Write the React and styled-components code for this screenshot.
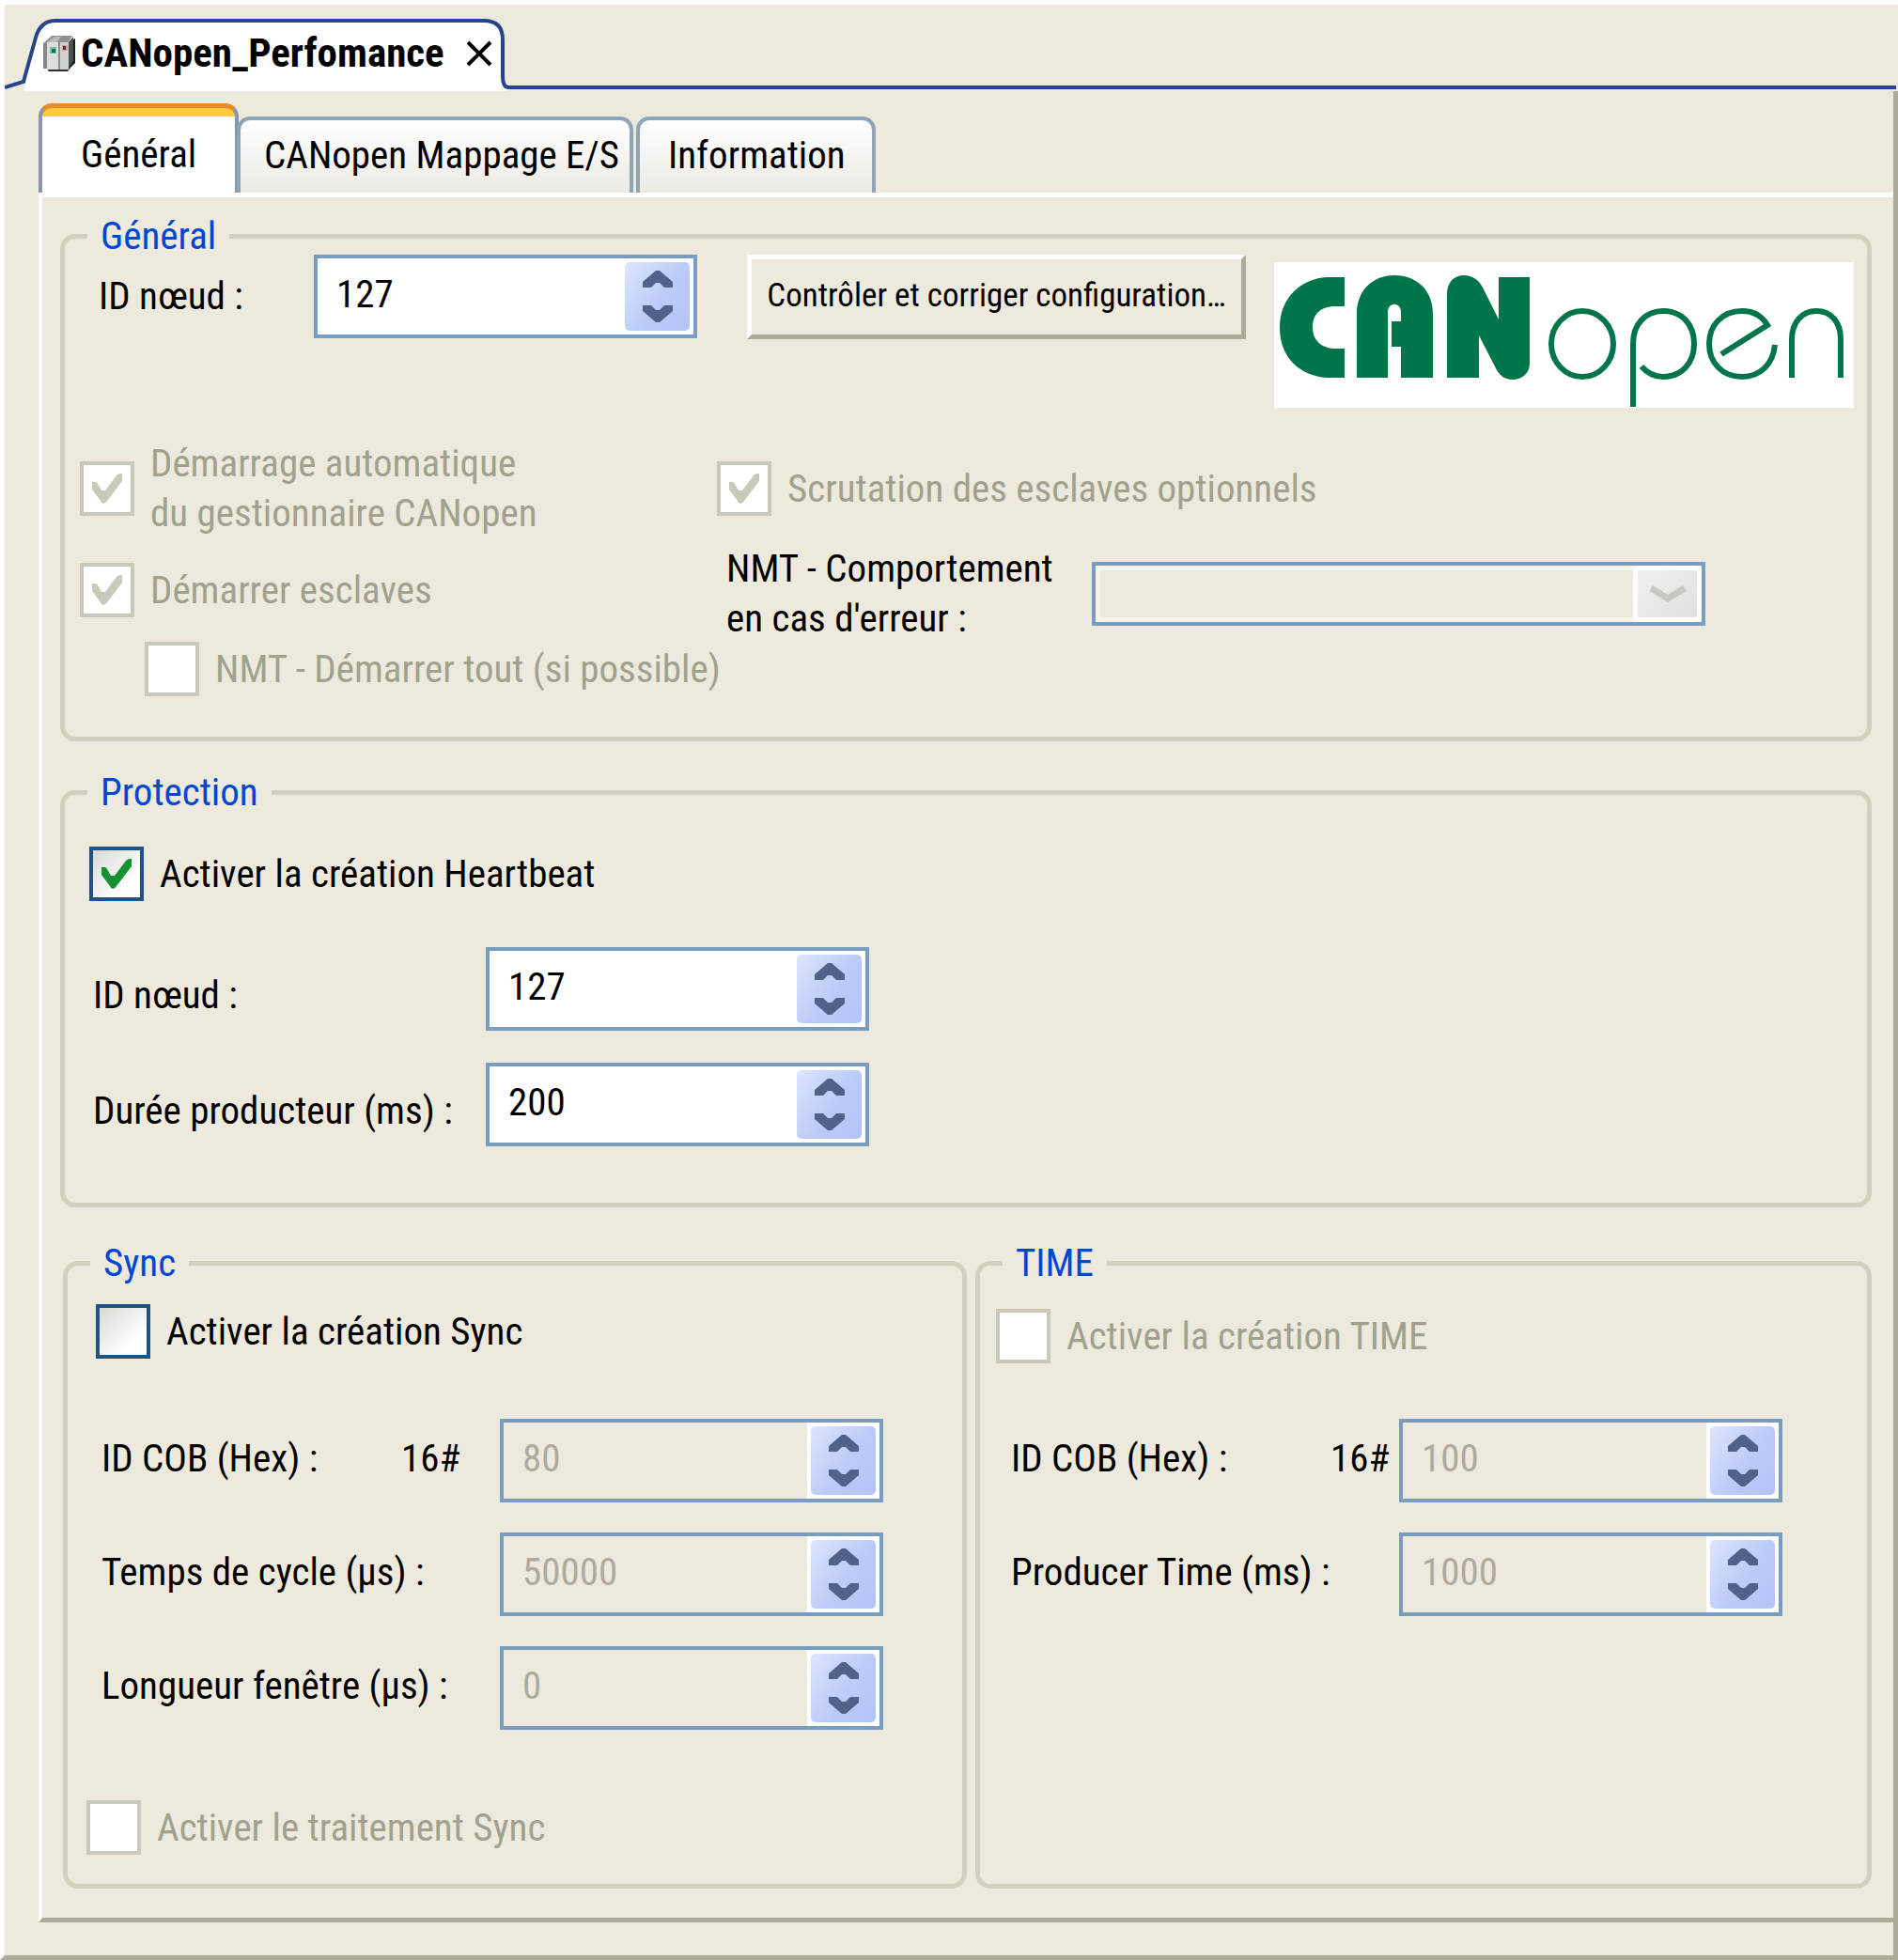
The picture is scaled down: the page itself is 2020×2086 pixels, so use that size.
import React from 'react';
import styled, { createGlobalStyle } from 'styled-components';

const BEIGE = '#edeadd';
const WHITE = '#ffffff';
const BLACK = '#000000';
const SHADOW = '#adaa97';
const NAVY = '#27438a';
const GROUP_BORDER = '#d2d1be';
const LEGEND_BLUE = '#0046d5';
const FIELD_BLUE = '#789dc0';
const TAB_BORDER = '#8fa5b5';
const DISABLED_TEXT = '#a1a18d';
const DISABLED_VALUE = '#afaa9c';
const DISABLED_BOX = '#c8c9b8';
const CHECK_BLUE = '#1f5385';
const CHECK_GREEN = '#159231';
const ARROW = '#4f6289';
const LOGO_GREEN = '#00754a';

const GlobalStyle = createGlobalStyle`
  * {
    box-sizing: border-box;
  }

  body {
    margin: 0;
    background-color: ${BEIGE};
  }

  body, input, button, select {
    font-family: "Roboto Condensed", "Liberation Sans", Arial, sans-serif;
    font-size: 41px;
    line-height: 53px;
    color: ${BLACK};
  }
`;

const Window = styled.div`
  display: flex;
  flex-direction: column;
  min-height: 100vh;
  background-color: ${BEIGE};
  border-top: 5px solid ${WHITE};
  border-left: 5px solid ${WHITE};
  border-bottom: 5px solid ${SHADOW};
`;

const DocumentBar = styled.header`
  display: flex;
  align-items: flex-end;
  padding-top: 15px;
`;

const DocumentTab = styled.div`
  position: relative;
  display: flex;
  align-items: center;
  width: 536px;
  height: 77px;
  padding: 0 17px 4px 40px;
`;

const DocumentShape = styled.svg`
  position: absolute;
  inset: 0;
  width: 100%;
  height: 100%;
`;

const DeviceIcon = styled.svg`
  position: relative;
  flex: none;
  width: 35px;
  height: 38px;
`;

const DocumentTitle = styled.span`
  position: relative;
  flex: 1;
  padding-left: 6px;
  font-size: 43px;
  font-weight: 700;
  white-space: nowrap;
`;

const CloseButton = styled.button`
  position: relative;
  display: flex;
  padding: 0;
  border: none;
  background: none;
`;

const DocumentLine = styled.div`
  flex: 1;
  margin: 0 2px 2px 0;
  border-bottom: 4px solid ${NAVY};
`;

const DocumentBody = styled.main`
  flex: 1;
  display: flex;
  flex-direction: column;
  padding: 13px 0 35px 36px;
  border-right: 5px solid ${SHADOW};
`;

const Tabs = styled.div`
  display: flex;
  align-items: flex-end;
`;

const Tab = styled.button`
  height: 81px;
  min-width: ${({ $width }) => $width}px;
  margin-right: 3px;
  padding: 0 0 2px ${({ $indent }) => $indent}px;
  border: 4px solid ${TAB_BORDER};
  border-bottom: none;
  border-radius: 14px 14px 0 0;
  background: linear-gradient(${WHITE}, #ebeae3);
  text-align: left;
  white-space: nowrap;
`;

const ActiveTab = styled(Tab)`
  height: 95px;
  margin-right: -2px;
  padding-top: 10px;
  border-color: #e68b2c #8598ae;
  border-top-width: 5px;
  background: linear-gradient(#ffca3b 9px, ${WHITE} 9px);
`;

const Panel = styled.section`
  flex: 1;
  padding: 21px 23px 29px 19px;
  border-top: 5px solid ${WHITE};
  border-left: 4px solid ${WHITE};
  border-bottom: 5px solid ${SHADOW};
`;

const Group = styled.fieldset`
  min-width: 0;
  margin: 0;
  padding: 0;
  border: 5px solid ${GROUP_BORDER};
  border-radius: 16px;
`;

const Legend = styled.legend`
  margin-left: 24px;
  padding: 0 14px;
  line-height: 40px;
  color: ${LEGEND_BLUE};
`;

const GeneralRow = styled.div`
  display: flex;
  align-items: flex-start;
  padding: 0 14px 0 36px;
`;

const GeneralLabel = styled.label`
  width: 229px;
  line-height: 88px;
`;

const ConfigButton = styled.button`
  width: 531px;
  height: 90px;
  margin-left: 53px;
  padding: 0 0 4px;
  border: 5px solid;
  border-color: ${WHITE} ${SHADOW} ${SHADOW} ${WHITE};
  background-color: ${BEIGE};
  font-size: 35px;
  white-space: nowrap;
`;

const Logo = styled.svg`
  flex: none;
  width: 617px;
  height: 155px;
  margin: 8px 0 0 auto;
  background-color: ${WHITE};
`;

const OptionGrid = styled.div`
  display: grid;
  grid-template-columns: 678px 1fr;
  padding: 33px 14px 43px 16px;
`;

const OptionColumn = styled.div`
  display: flex;
  flex-direction: column;
  gap: ${({ $gap }) => $gap}px;
`;

const CheckLabel = styled.label`
  display: flex;
  align-items: center;
  gap: 17px;
  min-height: ${({ $tall }) => ($tall ? 106 : 58)}px;
  margin-left: ${({ $indent = 0 }) => $indent}px;
  color: ${({ $disabled }) => ($disabled ? DISABLED_TEXT : BLACK)};
  white-space: nowrap;
`;

const CheckWrap = styled.span`
  position: relative;
  display: flex;
  flex: none;
`;

const CheckInput = styled.input`
  appearance: none;
  width: 58px;
  height: 58px;
  margin: 0;
  border: 4px solid ${CHECK_BLUE};
  background: linear-gradient(135deg, #d9dad4, ${WHITE} 75%);

  &:disabled {
    border-color: ${DISABLED_BOX};
    background: ${WHITE};
  }

  & + svg {
    display: none;
  }

  &:checked + svg {
    display: block;
  }
`;

const CheckMark = styled.svg`
  position: absolute;
  top: 13px;
  left: 13px;
  width: 32px;
  height: 32px;
  fill: ${({ $disabled }) => ($disabled ? DISABLED_BOX : CHECK_GREEN)};
  pointer-events: none;
`;

const NmtRow = styled.div`
  display: flex;
  align-items: center;
  padding-left: 10px;
`;

const NmtLabel = styled.label`
  width: 389px;
`;

const SelectWrap = styled.div`
  position: relative;
  display: flex;
  width: 653px;
`;

const Select = styled.select`
  appearance: none;
  width: 100%;
  height: 68px;
  padding: 0 90px 0 20px;
  border: 4px solid ${FIELD_BLUE};
  border-radius: 0;
  background-color: ${BEIGE};
  box-shadow: inset 0 0 0 5px #f6f5ea;
  opacity: 1;
`;

const SelectArrow = styled.span`
  position: absolute;
  top: 4px;
  right: 4px;
  display: flex;
  align-items: center;
  justify-content: center;
  width: 73px;
  height: 60px;
  border: 5px solid ${WHITE};
  border-radius: 8px;
  background: linear-gradient(135deg, #f1f1ef, #e3dfdd);
  outline: 2px solid ${WHITE};
  outline-offset: -2px;
  pointer-events: none;
`;

const Spin = styled.div`
  display: flex;
  flex: none;
  width: 408px;
  height: 89px;
  border: 4px solid ${FIELD_BLUE};
  background-color: ${({ $disabled }) => ($disabled ? BEIGE : WHITE)};
`;

const SpinInput = styled.input`
  flex: 1;
  min-width: 0;
  padding: 0 0 4px 20px;
  border: none;
  background: none;

  &:disabled {
    color: ${DISABLED_VALUE};
  }
`;

const SpinButtons = styled.div`
  display: flex;
  flex-direction: column;
  width: 77px;
  padding: 4px;
  background-color: ${WHITE};
`;

const SpinPlate = styled.div`
  flex: 1;
  display: flex;
  flex-direction: column;
  border-radius: 5px;
  background: linear-gradient(125deg, #dce6fe, #bccbf9 55%, #b3c3f5);
`;

const SpinButton = styled.button`
  flex: 1;
  display: flex;
  align-items: center;
  justify-content: center;
  padding: 0;
  border: none;
  background: none;
`;

const ProtectionGroup = styled(Group)`
  margin-top: 34px;
`;

const ProtectionFields = styled.div`
  display: flex;
  flex-direction: column;
  gap: 34px;
  padding: 38px 26px 60px;
`;

const ProtectionCheck = styled.div`
  margin-bottom: 15px;
`;

const ProtectionRow = styled.div`
  display: flex;
  align-items: center;
  padding-left: 4px;
`;

const ProtectionLabel = styled.label`
  width: 418px;
  padding-top: 14px;
  white-space: nowrap;
`;

const Columns = styled.div`
  display: grid;
  grid-template-columns: 962fr 954fr;
  gap: 9px;
  margin: 39px 0 0 3px;
`;

const ColumnFields = styled.div`
  display: flex;
  flex-direction: column;
  padding: ${({ $top }) => $top}px 0 31px ${({ $left }) => $left}px;
`;

const FieldRows = styled.div`
  display: flex;
  flex-direction: column;
  gap: 32px;
  padding: ${({ $top }) => $top}px 0 75px 16px;
`;

const FieldRow = styled.div`
  display: flex;
  align-items: center;
`;

const FieldLabel = styled.label`
  display: flex;
  justify-content: space-between;
  width: ${({ $width }) => $width}px;
  padding: 0 ${({ $gap }) => $gap}px 4px 0;
  white-space: nowrap;
`;

const Arrow = ({ down }) => (
  <svg width="32" height="18" viewBox="0 0 32 18" fill={ARROW} aria-hidden="true">
    <path
      transform={down ? 'rotate(180 16 9)' : undefined}
      d="M14 0h4l14 12v6h-9l-5-5h-4l-5 5H0v-6z"
    />
  </svg>
);

const SpinField = ({ id, value, disabled }) => (
  <Spin $disabled={disabled}>
    <SpinInput id={id} type="text" defaultValue={value} disabled={disabled} />
    <SpinButtons>
      <SpinPlate>
        <SpinButton type="button" aria-label="Augmenter">
          <Arrow />
        </SpinButton>
        <SpinButton type="button" aria-label="Diminuer">
          <Arrow down />
        </SpinButton>
      </SpinPlate>
    </SpinButtons>
  </Spin>
);

const Check = ({ checked, disabled, tall, indent, children }) => (
  <CheckLabel $disabled={disabled} $tall={tall} $indent={indent}>
    <CheckWrap>
      <CheckInput type="checkbox" defaultChecked={checked} disabled={disabled} />
      <CheckMark viewBox="0 0 32 32" $disabled={disabled}>
        <path d="M0 9h4q1 0 2 2l4 7h4L26 2q2-2 4-2h2v8L16 29q-2 3-4 3t-3-3L0 17z" />
      </CheckMark>
    </CheckWrap>
    <span>{children}</span>
  </CheckLabel>
);

const Device = () => (
  <DeviceIcon viewBox="0 0 35 38" aria-hidden="true">
    <path d="M27 37l8-8V3l-4 2z" fill="#16201c" />
    <path d="M4 34h26l-3 4H7z" fill="#2e302e" />
    <path d="M1 8l9-8h22l-5 8z" fill="#8f918e" />
    <path d="M5 7l8-6h7l-5 7z" fill="#b9bbb8" />
    <path d="M27 8l6-7v26l-6 9z" fill="#4d504e" />
    <rect x="1" y="8" width="5" height="27" fill="#858885" />
    <rect x="5" y="7" width="12" height="29" fill="#dcdedb" />
    <rect x="17" y="8" width="2" height="28" fill="#8b8e8b" />
    <rect x="19" y="7" width="9" height="29" fill="#d0d2cf" />
    <rect x="8" y="12" width="7" height="7" fill="#64c5a2" />
    <rect x="10" y="14" width="4" height="4" fill="#0d7350" />
    <rect x="21" y="10" width="6" height="6" fill="#c9a3a4" />
    <rect x="22" y="11" width="3" height="4" fill="#6b2328" />
  </DeviceIcon>
);

const CanOpenLogo = () => (
  <Logo viewBox="0 0 617 155" role="img" aria-label="CANopen">
    <g fill={LOGO_GREEN}>
      <path d="M75 16H56C28 18 6 38 6 70s22 51 50 53h19V92h-9c-15 0-25-8-25-23s10-22 25-22h9z" />
      <path d="M88 123V55c0-24 16-41 40-41 25 0 41 17 41 41v68h-34V90h-10V63h10V53c0-11-14-11-14 0v70z" />
      <path d="M184 123V34c0-12 7-20 18-20 9 0 16 5 20 13l17 34V16h33v92c0 10-8 17-18 17-9 0-15-5-19-14l-17-33v45z" />
    </g>
    <g fill="none" stroke={LOGO_GREEN} strokeWidth="6">
      <ellipse cx="328" cy="87" rx="33" ry="35" />
      <path d="M382 154V87c0-21 13-35 32-35 20 0 33 14 33 35s-14 35-33 35c-9 0-17-4-23-11" />
      <path d="M533 88c-2 21-16 34-35 34-21 0-35-15-35-35s14-35 35-35c12 0 21 5 27 15l-49 31" />
      <path d="M551 123V82c0-18 11-30 26-30 16 0 26 12 26 30v41" />
    </g>
  </Logo>
);

const App = () => {
  return (
    <>
      <GlobalStyle />
      <Window>
        <DocumentBar>
          <DocumentTab>
            <DocumentShape viewBox="0 0 536 77" preserveAspectRatio="none" aria-hidden="true">
              <path d="M20 77L33 20Q38 2 54 2H510Q530 2 530 22V64L536 77Z" fill={WHITE} />
              <path
                d="M0 73L20 67L33 20Q38 2 54 2H510Q530 2 530 22V60Q530 73 536 73"
                fill="none"
                stroke={NAVY}
                strokeWidth="4"
              />
            </DocumentShape>
            <Device />
            <DocumentTitle>CANopen_Perfomance</DocumentTitle>
            <CloseButton type="button" aria-label="Fermer">
              <svg width="28" height="28" viewBox="0 0 28 28" aria-hidden="true">
                <path d="M2 2L26 26M26 2L2 26" stroke={BLACK} strokeWidth="4" />
              </svg>
            </CloseButton>
          </DocumentTab>
          <DocumentLine />
        </DocumentBar>

        <DocumentBody>
          <Tabs role="tablist">
            <ActiveTab type="button" role="tab" aria-selected="true" $width={213} $indent={41}>
              Général
            </ActiveTab>
            <Tab type="button" role="tab" aria-selected="false" $width={422} $indent={25}>
              CANopen Mappage E/S
            </Tab>
            <Tab type="button" role="tab" aria-selected="false" $width={255} $indent={30}>
              Information
            </Tab>
          </Tabs>

          <Panel>
            <Group>
              <Legend>Général</Legend>
              <GeneralRow>
                <GeneralLabel htmlFor="node-id">ID nœud :</GeneralLabel>
                <SpinField id="node-id" value="127" />
                <ConfigButton type="button">Contrôler et corriger configuration…</ConfigButton>
                <CanOpenLogo />
              </GeneralRow>
              <OptionGrid>
                <OptionColumn $gap={26}>
                  <Check checked disabled tall>
                    Démarrage automatique
                    <br />
                    du gestionnaire CANopen
                  </Check>
                  <Check checked disabled>
                    Démarrer esclaves
                  </Check>
                  <Check disabled indent={69}>
                    NMT - Démarrer tout (si possible)
                  </Check>
                </OptionColumn>
                <OptionColumn $gap={6}>
                  <Check checked disabled tall>
                    Scrutation des esclaves optionnels
                  </Check>
                  <NmtRow>
                    <NmtLabel htmlFor="nmt-error">
                      NMT - Comportement
                      <br />
                      en cas d'erreur :
                    </NmtLabel>
                    <SelectWrap>
                      <Select id="nmt-error" disabled />
                      <SelectArrow>
                        <svg width="42" height="20" viewBox="0 0 42 20" aria-hidden="true">
                          <path d="M3 4l18 11L39 4" fill="none" stroke="#cac7c2" strokeWidth="7" />
                        </svg>
                      </SelectArrow>
                    </SelectWrap>
                  </NmtRow>
                </OptionColumn>
              </OptionGrid>
            </Group>

            <ProtectionGroup>
              <Legend>Protection</Legend>
              <ProtectionFields>
                <ProtectionCheck>
                  <Check checked>Activer la création Heartbeat</Check>
                </ProtectionCheck>
                <ProtectionRow>
                  <ProtectionLabel htmlFor="heartbeat-id">ID nœud :</ProtectionLabel>
                  <SpinField id="heartbeat-id" value="127" />
                </ProtectionRow>
                <ProtectionRow>
                  <ProtectionLabel htmlFor="heartbeat-time">Durée producteur (ms) :</ProtectionLabel>
                  <SpinField id="heartbeat-time" value="200" />
                </ProtectionRow>
              </ProtectionFields>
            </ProtectionGroup>

            <Columns>
              <Group>
                <Legend>Sync</Legend>
                <ColumnFields $top={24} $left={20}>
                  <Check indent={10}>Activer la création Sync</Check>
                  <FieldRows $top={64}>
                    <FieldRow>
                      <FieldLabel htmlFor="sync-cob" $width={424} $gap={42}>
                        <span>ID COB (Hex) :</span>
                        <span>16#</span>
                      </FieldLabel>
                      <SpinField id="sync-cob" value="80" disabled />
                    </FieldRow>
                    <FieldRow>
                      <FieldLabel htmlFor="sync-cycle" $width={424} $gap={0}>
                        Temps de cycle (µs) :
                      </FieldLabel>
                      <SpinField id="sync-cycle" value="50000" disabled />
                    </FieldRow>
                    <FieldRow>
                      <FieldLabel htmlFor="sync-window" $width={424} $gap={0}>
                        Longueur fenêtre (µs) :
                      </FieldLabel>
                      <SpinField id="sync-window" value="0" disabled />
                    </FieldRow>
                  </FieldRows>
                  <Check disabled>Activer le traitement Sync</Check>
                </ColumnFields>
              </Group>

              <Group>
                <Legend>TIME</Legend>
                <ColumnFields $top={29} $left={17}>
                  <Check disabled>Activer la création TIME</Check>
                  <FieldRows $top={59}>
                    <FieldRow>
                      <FieldLabel htmlFor="time-cob" $width={413} $gap={10}>
                        <span>ID COB (Hex) :</span>
                        <span>16#</span>
                      </FieldLabel>
                      <SpinField id="time-cob" value="100" disabled />
                    </FieldRow>
                    <FieldRow>
                      <FieldLabel htmlFor="time-producer" $width={413} $gap={0}>
                        Producer Time (ms) :
                      </FieldLabel>
                      <SpinField id="time-producer" value="1000" disabled />
                    </FieldRow>
                  </FieldRows>
                </ColumnFields>
              </Group>
            </Columns>
          </Panel>
        </DocumentBody>
      </Window>
    </>
  );
};

export default App;
